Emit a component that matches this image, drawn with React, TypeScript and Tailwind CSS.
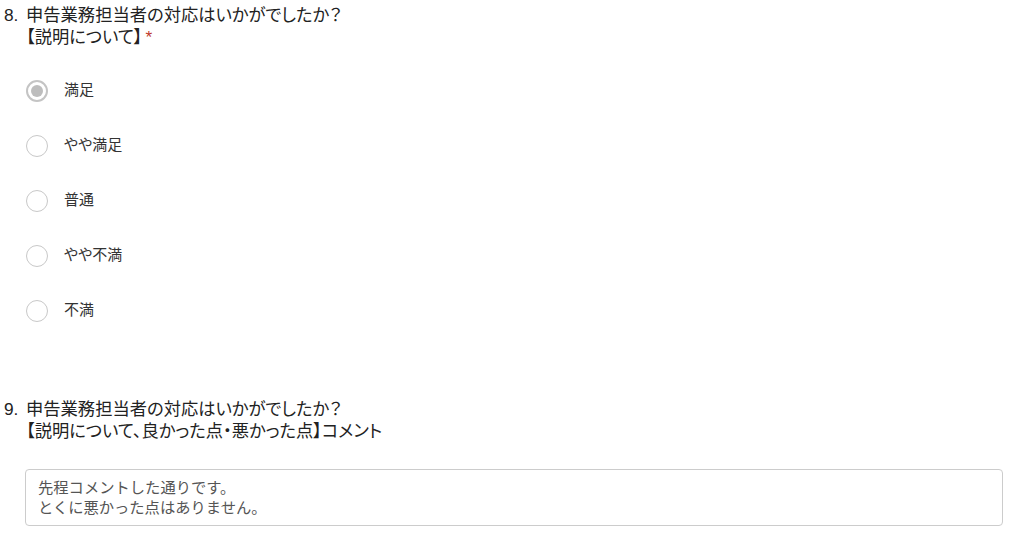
import React from "react";

const font = { fontFamily: '"Liberation Sans", "Noto Sans CJK JP", sans-serif' };

function Radio({ checked }: { checked?: boolean }) {
  if (checked) {
    return (
      <span className="flex h-[22px] w-[22px] items-center justify-center rounded-full border-2 border-[#c4c4c4] bg-white">
        <span className="h-[12px] w-[12px] rounded-full bg-[#bdbdbd]" />
      </span>
    );
  }
  return <span className="block h-[22px] w-[22px] rounded-full border border-[#c8c8c8] bg-white" />;
}

const options = ["満足", "やや満足", "普通", "やや不満", "不満"];

export default function App() {
  return (
    <div className="min-h-[534px] w-[1017px] bg-white text-[#222]" style={font}>
      <div className="pl-[4px] pt-[4px] [font-feature-settings:'palt']">
        <div className="flex text-[17.3px] leading-[22px]">
          <span className="w-[22px]">8.</span>
          <div>
            <div>申告業務担当者の対応はいかがでしたか？</div>
            <div>
              【説明について】<span className="ml-[3px] text-[#c0392b]">*</span>
            </div>
          </div>
        </div>
      </div>
      <div className="mt-[15px] pl-[26px]">
        {options.map((o, i) => (
          <div key={o} className="flex h-[55px] items-center">
            <Radio checked={i === 0} />
            <span className="ml-[16px] text-[15px] text-[#333] [font-feature-settings:'palt']">{o}</span>
          </div>
        ))}
      </div>
      <div className="mt-[60px] pl-[4px] [font-feature-settings:'palt']">
        <div className="flex text-[17.3px] leading-[22px]">
          <span className="w-[22px]">9.</span>
          <div>
            <div>申告業務担当者の対応はいかがでしたか？</div>
            <div>【説明について、良かった点・悪かった点】コメント</div>
          </div>
        </div>
      </div>
      <div className="ml-[25px] mt-[27px] h-[57px] w-[978px] rounded-[4px] border border-[#cccccc] px-[12px] pt-[8px] text-[15.3px] leading-[20px] text-[#555]">
        <div>先程コメントした通りです。</div>
        <div>とくに悪かった点はありません。</div>
      </div>
    </div>
  );
}
